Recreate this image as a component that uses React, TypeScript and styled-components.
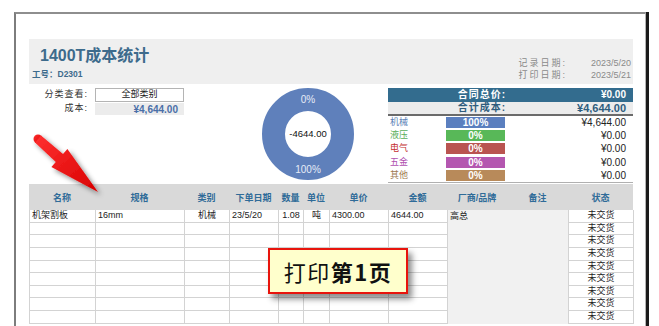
import React from "react";
import styled, { createGlobalStyle } from "styled-components";

const GlobalStyle = createGlobalStyle`
  html, body { margin: 0; padding: 0; background: #ffffff; }
  body { font-family: "Liberation Sans", "Noto Sans CJK SC", sans-serif; }
  * { box-sizing: border-box; }
`;

const COLS = "66px 89px 45px 49px 25px 26px 59px 59px 60px 61px 65px";
const HEAD_BLUE = "#3d6b8c";

const Page = styled.div`
  position: relative;
  width: 659px;
  height: 326px;
  overflow: hidden;
  padding: 12px 0 0 14px;
  background: #ffffff;
`;

const Frame = styled.div`
  width: 632px;
  height: 314px;
  border-left: 2px solid #7d7d7d;
  border-top: 2px solid #8e8e8e;
  border-right: 1px solid #b5b5b5;
  box-shadow: 3px 0 0 #1a1a1a;
  padding: 25px 12px 0 13px;
`;

const HeaderBand = styled.div`
  height: 45px;
  background: #efefef;
  display: flex;
  justify-content: space-between;
`;

const TitleCol = styled.div`
  display: flex;
  flex-direction: column;
  padding: 7px 0 0 3px;
`;

const Title = styled.div`
  margin-left: 8px;
  font-size: 16px;
  line-height: 20px;
  font-weight: 700;
  color: ${HEAD_BLUE};
`;

const EmpNo = styled.div`
  margin-top: 3px;
  font-size: 8.5px;
  line-height: 11px;
  font-weight: 700;
  color: ${HEAD_BLUE};
`;

const DateGrid = styled.div`
  display: grid;
  grid-template-columns: auto 64px;
  align-content: start;
  padding: 18px 2px 0 0;
  font-size: 9px;
  line-height: 12px;
  color: #8a8a8a;
`;

const DateLabel = styled.span`
  letter-spacing: 2px;
`;

const DateValue = styled.span`
  text-align: right;
`;

const Middle = styled.div`
  display: flex;
  height: 100px;
`;

const FilterBlock = styled.div`
  width: 155px;
  padding-top: 4px;
  display: grid;
  grid-template-columns: 66px 89px;
  grid-auto-rows: 13.5px;
  align-content: start;
`;

const FilterLabel = styled.div`
  text-align: right;
  padding-right: 7px;
  font-size: 9px;
  line-height: 13px;
  letter-spacing: 1px;
  color: #333333;
`;

const SelectBox = styled.div`
  border: 1px solid #b4b4b4;
  background: #ffffff;
  text-align: center;
  font-size: 9px;
  line-height: 11px;
  color: #222222;
`;

const CostBox = styled.div`
  margin-top: 1px;
  background: #ececec;
  text-align: right;
  padding-right: 6px;
  font-size: 10px;
  line-height: 13px;
  font-weight: 700;
  color: #4a6fa8;
`;

const DonutBlock = styled.div`
  width: 204px;
  padding: 0 0 0 74px;
`;

const Summary = styled.div`
  width: 245px;
  padding-top: 4px;
`;

const TotalRow = styled.div<{ $tone: "blue" | "gray" }>`
  display: grid;
  grid-template-columns: 188px 1fr;
  align-items: center;
  height: 14px;
  background: ${(p) => (p.$tone === "blue" ? "#336c8e" : "#ececec")};
  color: ${(p) => (p.$tone === "blue" ? "#ffffff" : "#2f5d7e")};
  border-bottom: ${(p) => (p.$tone === "gray" ? "2px solid #6b6b6b" : "none")};
  font-weight: 700;
  font-size: 10px;
  line-height: 12px;
`;

const TotalLabel = styled.span`
  text-align: center;
  letter-spacing: 1px;
`;

const TotalValue = styled.span<{ $big?: boolean }>`
  text-align: right;
  padding-right: 7px;
  font-size: ${(p) => (p.$big ? "11px" : "10px")};
`;

const CatList = styled.div`
  border-bottom: 1px solid #b0b0b0;
`;

const CatRow = styled.div`
  display: grid;
  grid-template-columns: 58px 59px 1fr;
  align-items: center;
  height: 13.2px;
`;

const CatLabel = styled.span<{ $color: string }>`
  padding-left: 2px;
  font-size: 9px;
  line-height: 11px;
  color: ${(p) => p.$color};
`;

const Bar = styled.span<{ $color: string }>`
  height: 11px;
  background: ${(p) => p.$color};
  color: #ffffff;
  font-weight: 700;
  font-size: 10px;
  line-height: 11px;
  text-align: center;
`;

const CatValue = styled.span`
  text-align: right;
  padding-right: 7px;
  font-size: 10px;
  line-height: 11px;
  color: #222222;
`;

const TableHead = styled.div`
  display: grid;
  grid-template-columns: ${COLS};
  height: 26px;
  background: #d9d9d9;
`;

const HeadCell = styled.div`
  display: flex;
  align-items: center;
  justify-content: center;
  font-size: 9px;
  font-weight: 700;
  color: #2f6b98;
`;

const TableBody = styled.div`
  display: grid;
  grid-template-columns: ${COLS};
  grid-auto-rows: 12.625px;
  border-left: 1px solid #d3d3d3;
`;

const Cell = styled.div<{ $align?: "left" | "center" | "right" }>`
  border-right: 1px solid #d3d3d3;
  border-bottom: 1px solid #d3d3d3;
  background: #ffffff;
  padding: 0 2px;
  font-size: 9px;
  line-height: 11.6px;
  color: #222222;
  white-space: nowrap;
  overflow: hidden;
  text-align: ${(p) => p.$align || "left"};
`;

const MergedCell = styled.div<{ $rows: number }>`
  grid-column: 9 / span 2;
  grid-row: 1 / span ${(p) => p.$rows};
  background: #f1f1f1;
  border-right: 1px solid #d3d3d3;
  padding: 0 2px;
  font-size: 9px;
  line-height: 12px;
  color: #222222;
`;

const Callout = styled.div`
  position: absolute;
  left: 268px;
  top: 248px;
  width: 140px;
  height: 46px;
  background: #ffffcc;
  border: 2px solid #e8140c;
  box-shadow: 4px 5px 6px rgba(0, 0, 0, 0.45);
  display: flex;
  align-items: center;
  justify-content: center;
  font-family: "Noto Sans CJK SC", sans-serif;
  font-size: 22px;
  line-height: 26px;
  letter-spacing: 1.5px;
  color: #111111;
`;

const CalloutStrong = styled.span`
  font-weight: 700;
`;

const ArrowSvg = styled.svg`
  position: absolute;
  left: 0;
  top: 0;
`;

const categories = [
  { name: "机械", color: "#5a7fb5", bar: "#5b7fbf", pct: "100%", value: "¥4,644.00" },
  { name: "液压", color: "#5aae5a", bar: "#58b858", pct: "0%", value: "¥0.00" },
  { name: "电气", color: "#c43030", bar: "#b95450", pct: "0%", value: "¥0.00" },
  { name: "五金", color: "#b050b0", bar: "#b457b0", pct: "0%", value: "¥0.00" },
  { name: "其他", color: "#a07a50", bar: "#b88a5a", pct: "0%", value: "¥0.00" },
];

const headers = ["名称", "规格", "类别", "下单日期", "数量", "单位", "单价", "金额", "厂商/品牌", "备注", "状态"];

const ROWS = 9;

const firstRow: { text: string; align: "left" | "center" | "right" }[] = [
  { text: "机架割板", align: "left" },
  { text: "16mm", align: "left" },
  { text: "机械", align: "center" },
  { text: "23/5/20", align: "left" },
  { text: "1.08", align: "center" },
  { text: "吨", align: "center" },
  { text: "4300.00", align: "left" },
  { text: "4644.00", align: "left" },
];

function Donut() {
  return (
    <svg width="100" height="100" viewBox="0 0 100 100">
      <circle cx="50" cy="50" r="34.5" fill="none" stroke="#5f80bb" strokeWidth="23" />
      <text x="50" y="19" textAnchor="middle" fontSize="10" fill="#e6ecf7" fontFamily="Liberation Sans, sans-serif">0%</text>
      <text x="50" y="89" textAnchor="middle" fontSize="10" fill="#e6ecf7" fontFamily="Liberation Sans, sans-serif">100%</text>
      <text x="50" y="53" textAnchor="middle" fontSize="9.5" fill="#111" fontFamily="Liberation Sans, sans-serif">-4644.00</text>
    </svg>
  );
}

function Arrow() {
  return (
    <ArrowSvg width="130" height="210" viewBox="0 0 130 210">
      <defs>
        <linearGradient id="arrowGrad" x1="0" y1="0" x2="1" y2="1">
          <stop offset="0" stopColor="#ff3030" />
          <stop offset="1" stopColor="#d80000" />
        </linearGradient>
        <filter id="arrowShadow" x="-30%" y="-30%" width="160%" height="160%">
          <feDropShadow dx="3" dy="3" stdDeviation="2.5" floodColor="#000" floodOpacity="0.45" />
        </filter>
      </defs>
      <g filter="url(#arrowShadow)" fill="url(#arrowGrad)">
        <circle cx="38" cy="139" r="4.5" />
        <polygon points="35,142.4 41,135.6 63,153.9 67.4,149 98,192 51.4,167 55.8,162.1" />
      </g>
    </ArrowSvg>
  );
}

export default function App() {
  const bodyCells: React.ReactNode[] = [];
  for (let r = 0; r < ROWS; r++) {
    for (let c = 0; c < 8; c++) {
      const item = r === 0 ? firstRow[c] : { text: "", align: "left" as const };
      bodyCells.push(
        <Cell key={`${r}-${c}`} $align={item.align}>
          {item.text}
        </Cell>
      );
    }
    bodyCells.push(
      <Cell key={`${r}-s`} $align="center">
        未交货
      </Cell>
    );
  }

  return (
    <>
      <GlobalStyle />
      <Page>
        <Frame>
          <HeaderBand>
            <TitleCol>
              <Title>1400T成本统计</Title>
              <EmpNo>工号：D2301</EmpNo>
            </TitleCol>
            <DateGrid>
              <DateLabel>记录日期:</DateLabel>
              <DateValue>2023/5/20</DateValue>
              <DateLabel>打印日期:</DateLabel>
              <DateValue>2023/5/21</DateValue>
            </DateGrid>
          </HeaderBand>

          <Middle>
            <FilterBlock>
              <FilterLabel>分类查看:</FilterLabel>
              <SelectBox>全部类别</SelectBox>
              <FilterLabel>成本:</FilterLabel>
              <CostBox>¥4,644.00</CostBox>
            </FilterBlock>
            <DonutBlock>
              <Donut />
            </DonutBlock>
            <Summary>
              <TotalRow $tone="blue">
                <TotalLabel>合同总价:</TotalLabel>
                <TotalValue>¥0.00</TotalValue>
              </TotalRow>
              <TotalRow $tone="gray">
                <TotalLabel>合计成本:</TotalLabel>
                <TotalValue $big>¥4,644.00</TotalValue>
              </TotalRow>
              <CatList>
                {categories.map((c) => (
                  <CatRow key={c.name}>
                    <CatLabel $color={c.color}>{c.name}</CatLabel>
                    <Bar $color={c.bar}>{c.pct}</Bar>
                    <CatValue>{c.value}</CatValue>
                  </CatRow>
                ))}
              </CatList>
            </Summary>
          </Middle>

          <TableHead>
            {headers.map((h) => (
              <HeadCell key={h}>{h}</HeadCell>
            ))}
          </TableHead>
          <TableBody>
            <MergedCell $rows={ROWS}>高总</MergedCell>
            {bodyCells}
          </TableBody>
        </Frame>

        <Arrow />
        <Callout>
          打印<CalloutStrong>第1页</CalloutStrong>
        </Callout>
      </Page>
    </>
  );
}
